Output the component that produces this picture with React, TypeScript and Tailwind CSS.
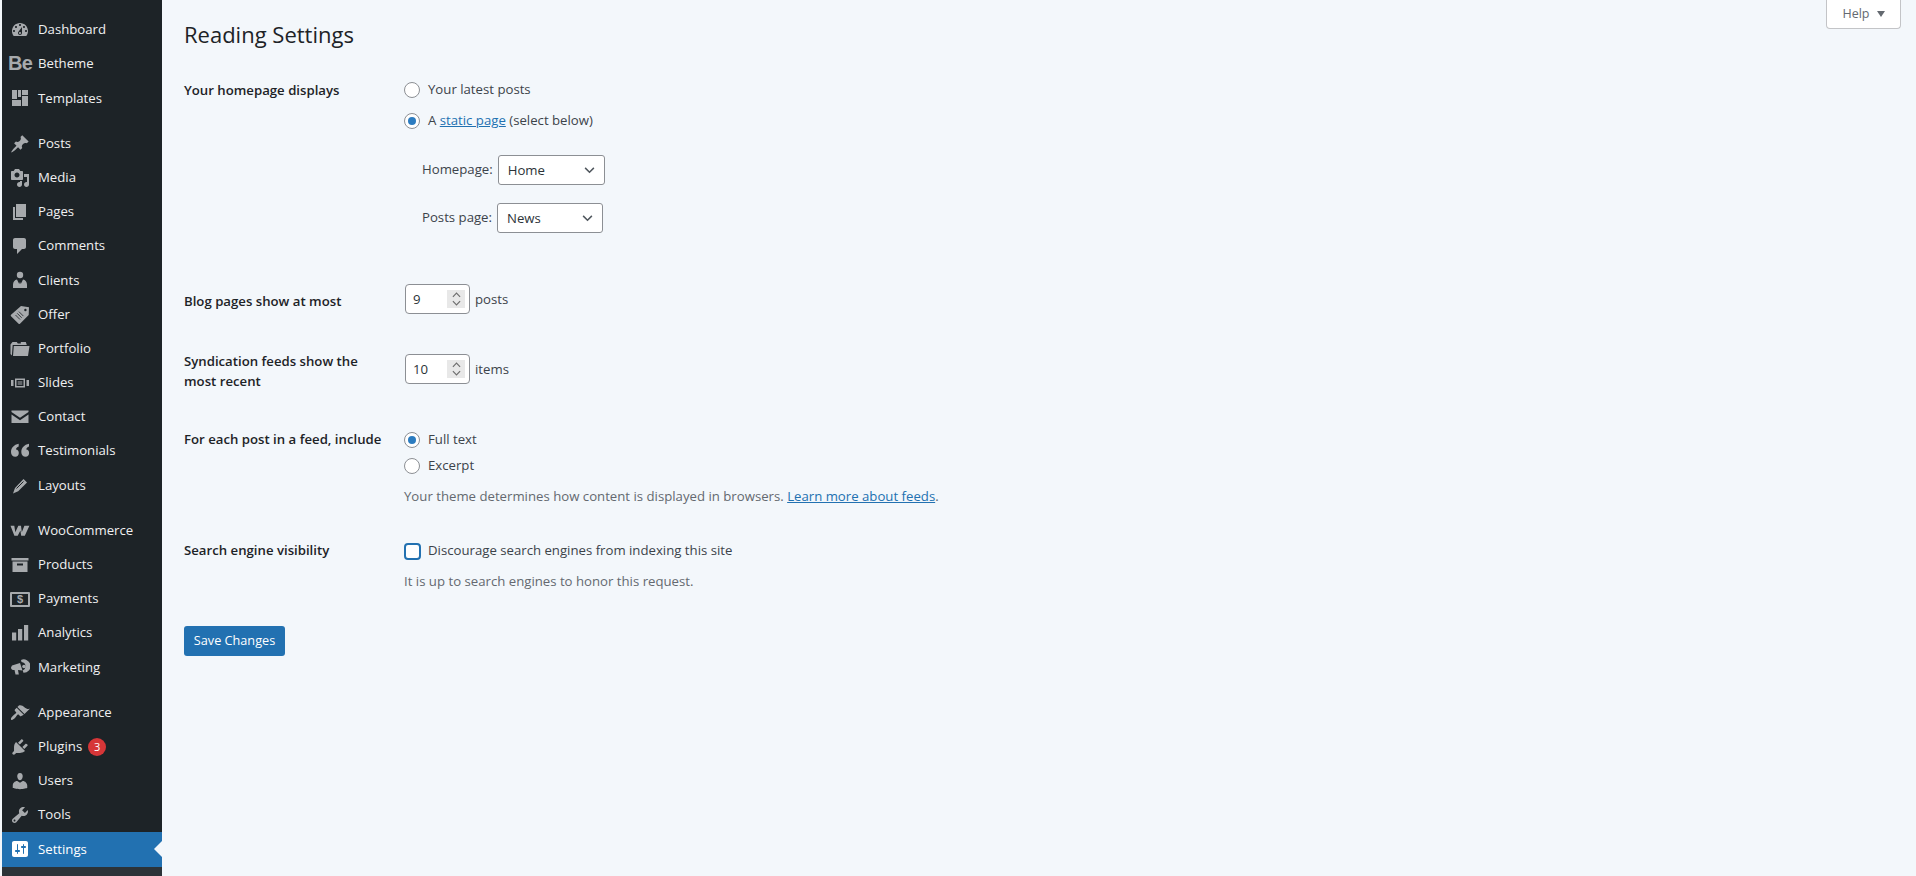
import React from "react";

type Item = { label: string; icon: React.ReactNode; gap?: boolean; badge?: string; active?: boolean };

const P = ({ d }: { d: string }) => (
  <svg viewBox="0 0 20 20" className="w-5 h-5 fill-current" fillRule="evenodd"><path d={d} /></svg>
);
const S = ({ children }: { children: React.ReactNode }) => (
  <svg viewBox="0 0 20 20" className="w-5 h-5 fill-current">{children}</svg>
);

const items: Item[] = [
  { label: "Dashboard", icon: <P d="M3.76 16h12.48c1.1-1.37 1.76-3.11 1.76-5 0-4.42-3.58-8-8-8s-8 3.58-8 8c0 1.89.66 3.63 1.76 5zM10 4c.55 0 1 .45 1 1s-.45 1-1 1-1-.45-1-1 .45-1 1-1zM6 6c.55 0 1 .45 1 1s-.45 1-1 1-1-.45-1-1 .45-1 1-1zm8 0c.55 0 1 .45 1 1s-.45 1-1 1-1-.45-1-1 .45-1 1-1zm-5.37 5.55L12 7v6c0 1.1-.9 2-2 2s-2-.9-2-2c0-.57.24-1.08.63-1.45zM4 10c.55 0 1 .45 1 1s-.45 1-1 1-1-.45-1-1 .45-1 1-1zm12 0c.55 0 1 .45 1 1s-.45 1-1 1-1-.45-1-1 .45-1 1-1zm-5 3c0-.55-.45-1-1-1s-1 .45-1 1 .45 1 1 1 1-.45 1-1z" /> },
  { label: "Betheme", icon: <span className="font-['Liberation_Sans',sans-serif] font-bold text-[20px] leading-5 tracking-[-0.6px] -ml-[2px] -mt-[2px]">Be</span> },
  { label: "Templates", icon: <S><rect x="2" y="2" width="5" height="9" /><rect x="8" y="2" width="3" height="7" /><rect x="12" y="2" width="6" height="5" /><rect x="12" y="8" width="6" height="10" /><rect x="2" y="12" width="9" height="6" /></S> },
  { label: "Posts", gap: true, icon: <P d="M10.44 3.02l1.82-1.82 6.36 6.35-1.83 1.82c-1.05-.68-2.48-.57-3.41.36l-.75.75c-.92.93-1.04 2.35-.35 3.41l-1.83 1.82-2.41-2.41-2.8 2.79c-.42.42-3.38 2.71-3.8 2.29s1.86-3.39 2.28-3.81l2.79-2.79L4.1 9.36l1.83-1.82c1.05.69 2.48.57 3.4-.36l.75-.75c.93-.92 1.05-2.35.36-3.41z" /> },
  { label: "Media", icon: <P d="M13 11V4c0-.55-.45-1-1-1h-1.67L9 1H5L3.67 3H2c-.55 0-1 .45-1 1v7c0 .55.45 1 1 1h10c.55 0 1-.45 1-1zM7 4.5c1.38 0 2.5 1.12 2.5 2.5S8.38 9.5 7 9.5 4.5 8.38 4.5 7 5.62 4.5 7 4.5zM14 6h5v10.5c0 1.38-1.12 2.5-2.5 2.5S14 17.88 14 16.5s1.12-2.5 2.5-2.5c.17 0 .34.02.5.05V9h-3V6zm-4 8.05V13h2v3.5c0 1.38-1.12 2.5-2.5 2.5S7 17.88 7 16.5 8.12 14 9.5 14c.17 0 .34.02.5.05z" /> },
  { label: "Pages", icon: <P d="M6 15V2h10v13H6zm-1 1h8v2H3V5h2v11z" /> },
  { label: "Comments", icon: <P d="M5 2h9c1.1 0 2 .9 2 2v7c0 1.1-.9 2-2 2h-2l-5 5v-5H5c-1.1 0-2-.9-2-2V4c0-1.1.9-2 2-2z" /> },
  { label: "Clients", icon: <S><circle cx="10" cy="5" r="3.2" /><path d="M7 9.5c-2.4.4-4 2.4-4 5V18h14v-3.5c0-2.6-1.600-4.600-4-5l-2.200 4.500L10 12l-.8 2z" /></S> },
  { label: "Offer", icon: <S><path d="M11 1l8 1.300-.3 7.700-8.700 8.700a1 1 0 0 1-1.400 0L1 11.200a1 1 0 0 1 0-1.400zM15.400 3.800a1.200 1.200 0 1 0 0 2.400 1.200 1.200 0 0 0 0-2.400z" fillRule="evenodd" /><path d="M5.500 10l4.500 4.500M7.200 8.300l4.500 4.500M8.900 6.600l4.500 4.500" stroke="#1d2327" strokeWidth=".8" /></S> },
  { label: "Portfolio", icon: <S><path d="M.5 5.500L2.500 3h4.300l1 1.500h3V3h5l1 3H2.700L1.900 16.500.5 15zM3.800 7H19.500l-1.500 10H3z" /></S> },
  { label: "Slides", icon: <S><path d="M5 5.500h10v9H5zm1.500 1.500v6h7V7zM7.700 8.500h4.600v1H7.700zm0 2h4.600v1H7.700zM1 7h2.500v6H1zm15.500 0H19v6h-2.500z" fillRule="evenodd" /></S> },
  { label: "Contact", icon: <S><path d="M1.500 3.500h17v1.500L10 10.800 1.500 5zM1.500 7.500L10 13.300l8.500-5.800V16h-17z" /></S> },
  { label: "Testimonials", icon: <S><path d="M8.700 2.800v2.600c-1.600.5-2.600 1.500-2.700 3 1.600 0 2.800 1.400 2.800 3.500 0 2.400-1.400 3.800-3.500 3.800C2.800 15.700 1 14 1 11c0-4 3-7.400 7.700-8.200zm10.300 0v2.600c-1.600.5-2.600 1.500-2.700 3 1.600 0 2.800 1.400 2.800 3.500 0 2.400-1.400 3.800-3.500 3.800-2.500 0-4.300-1.700-4.300-4.700 0-4 3-7.400 7.700-8.200z" /></S> },
  { label: "Layouts", icon: <S><path d="M13.500 3l3.500 3.500-8.800 8.800-5.200 2.200 2-5.500z" /><path d="M6.500 12.500l7-7" stroke="#1d2327" strokeWidth="1" /></S> },
  { label: "WooCommerce", gap: true, icon: <S><path d="M.5 4.800h3.800l1 6.400 3-6.400h2.700l.8 6.400 2.600-6.400h5l-4.600 10h-3.600l-.8-5.300-2.700 5.300H4.400z" /></S> },
  { label: "Products", icon: <S><path d="M1.500 3h17v2.500h-17zM2.500 6.500h15V17h-15zM7 8.500v2h6v-2z" fillRule="evenodd" /></S> },
  { label: "Payments", icon: <span className="w-5 h-[15px] border-2 border-current rounded-[1px] flex items-center justify-center text-[11px] leading-none font-bold font-['Liberation_Sans',sans-serif]">$</span> },
  { label: "Analytics", icon: <S><rect x="2" y="9.500" width="4.200" height="8" /><rect x="8" y="6" width="4.200" height="11.500" /><rect x="14" y="2" width="4.200" height="15.500" /></S> },
  { label: "Marketing", icon: <S><path d="M2 8.500l8-2.500 2.500 7.500-4.500-.5.800 4.500H5.500L4.500 13H3c-1 0-2-1.200-2-2.500z" /><path d="M11 3a6.700 6.700 0 1 1 2.500 12.800l-.8-2.300a4.500 4.500 0 0 0 2.800-4.200A4.500 4.500 0 0 0 11.500 5z" /><circle cx="14" cy="9.500" r="1.800" /></S> },
  { label: "Appearance", gap: true, icon: <P d="M14.480 11.060L7.410 3.990l1.500-1.500c.5-.56 2.300-.47 3.510.32 1.210.8 1.430 1.280 2.910 2.100 1.180.64 2.450 1.260 4.450.85zm-.71.71L6.700 4.700 4.930 6.470c-.39.39-.39 1.020 0 1.410l1.060 1.060c.39.39.39 1.030 0 1.420-.6.6-1.430 1.110-2.210 1.690-.35.26-.7.530-1.010.840-1.340 1.340-2.370 2.950-1.580 3.740.79.790 2.400-.24 3.740-1.580.3-.3.580-.66.840-1.010.58-.78 1.090-1.610 1.690-2.210.39-.39 1.020-.39 1.410 0l1.060 1.060c.39.39 1.020.39 1.410 0z" /> },
  { label: "Plugins", badge: "3", icon: <P d="M13.110 4.360L9.870 7.600 8 5.730l3.240-3.240c.35-.34 1.050-.2 1.560.32.52.51.66 1.210.31 1.550zm-8 1.770l.91-1.120 9.010 9.010-1.190.84c-.71.71-2.630 1.160-3.820 1.160H6.140L4.900 17.260c-.59.59-1.540.59-2.120 0-.59-.58-.59-1.530 0-2.120l1.240-1.240v-3.880c0-1.130.4-3.190 1.090-3.890zm7.260 3.970l3.240-3.240c.34-.35 1.040-.21 1.550.31.52.51.66 1.210.31 1.550l-3.240 3.250z" /> },
  { label: "Users", icon: <P d="M10 9.250c-2.270 0-2.730-3.440-2.730-3.440C7 4.020 7.820 2 9.970 2c2.160 0 2.980 2.020 2.710 3.810 0 0-.41 3.440-2.680 3.440zm0 2.570L12.720 10c2.390 0 4.520 2.330 4.520 4.530v2.490s-3.650 1.130-7.240 1.130c-3.650 0-7.240-1.130-7.240-1.130v-2.490c0-2.250 1.940-4.480 4.470-4.480z" /> },
  { label: "Tools", icon: <P d="M16.680 9.770c-1.340 1.340-3.300 1.670-4.950.99l-5.410 6.520c-.99.99-2.590.99-3.580 0s-.99-2.590 0-3.570l6.520-5.420c-.68-1.650-.35-3.610.99-4.950 1.280-1.280 3.120-1.620 4.720-1.060l-2.890 2.890 2.820 2.820 2.860-2.870c.53 1.580.18 3.390-1.080 4.650zM3.810 16.210c.4.39 1.040.39 1.430 0 .4-.4.4-1.040 0-1.430-.39-.4-1.030-.4-1.430 0-.39.39-.39 1.030 0 1.430z" /> },
  { label: "Settings", active: true, icon: <P d="M18 16V4c0-1.100-.9-2-2-2H4c-1.100 0-2 .9-2 2v12c0 1.100.9 2 2 2h12c1.100 0 2-.9 2-2zM8 11h1c.55 0 1 .45 1 1s-.45 1-1 1H8v1.500c0 .28-.22.5-.5.5s-.5-.22-.5-.5V13H6c-.55 0-1-.45-1-1s.45-1 1-1h1V5.500c0-.28.22-.5.5-.5s.5.22.5.5V11zm5-2h-1c-.55 0-1-.45-1-1s.45-1 1-1h1V5.500c0-.28.22-.5.5-.5s.5.22.5.5V7h1c.55 0 1 .45 1 1s-.45 1-1 1h-1v5.500c0 .28-.22.5-.5.5s-.5-.22-.5-.5V9z" /> },
];

function Radio({ on }: { on?: boolean }) {
  return (
    <span className="w-4 h-4 rounded-full border border-[#8c8f94] bg-white flex items-center justify-center shrink-0">
      {on && <span className="w-2 h-2 rounded-full bg-[#2c7cc0]" />}
    </span>
  );
}

function Chevron() {
  return (
    <svg viewBox="0 0 12 8" className="w-[11px] h-[7px]" fill="none" stroke="#50575e" strokeWidth="1.700"><path d="M1 1l5 5 5-5" /></svg>
  );
}

function Select({ value, w }: { value: string; w: string }) {
  return (
    <div className={`${w} h-[30px] bg-white border border-[#8c8f94] rounded-[3px] flex items-center justify-between pl-[9px] pr-[9px] text-[#2c3338]`}>
      <span className="mt-[2px]">{value}</span>
      <Chevron />
    </div>
  );
}

function Num({ value }: { value: string }) {
  return (
    <div className="w-[65px] h-[30px] bg-white border border-[#8c8f94] rounded-[4px] flex items-center justify-between pl-[7px] pr-[4px] text-[#2c3338]">
      <span className="mt-[1px]">{value}</span>
      <span className="w-[18px] h-[18px] bg-[#e8e8e8] flex flex-col items-center justify-center gap-[2px]">
        <svg viewBox="0 0 10 6" className="w-[9px] h-[6px]" fill="none" stroke="#6e6e6e" strokeWidth="1.300"><path d="M1 5l4-4 4 4" /></svg>
        <svg viewBox="0 0 10 6" className="w-[9px] h-[6px]" fill="none" stroke="#6e6e6e" strokeWidth="1.300"><path d="M1 1l4 4 4-4" /></svg>
      </span>
    </div>
  );
}

function Label({ children, className = "" }: { children: React.ReactNode; className?: string }) {
  return <div className={`w-[220px] shrink-0 pr-4 font-semibold text-[#1d2327] leading-[20px] ${className}`}>{children}</div>;
}

export default function App() {
  return (
    <div className="w-[1916px] h-[876px] overflow-hidden flex bg-[#f3f7fb] text-[13.2px] text-[#3c434a] font-['Open_Sans',sans-serif]">
      <aside className="w-[160px] ml-[2px] h-full shrink-0 bg-[#1d2327] pt-[13px] flex flex-col text-[#f0f0f1]">
        {items.map((it) => (
          <div
            key={it.label}
            className={`relative h-[34.2px] shrink-0 flex items-center ${it.gap ? "mt-[11px]" : ""} ${it.active ? "bg-[#2271b1] text-white" : ""}`}
          >
            <span className={`w-[36px] pl-[8px] shrink-0 flex items-center ${it.active ? "text-white" : "text-[#a7aaad]"}`}>{it.icon}</span>
            <span>{it.label}</span>
            {it.badge && (
              <span className="ml-[6px] w-[18px] h-[18px] rounded-full bg-[#d63638] text-white text-[11px] flex items-center justify-center">{it.badge}</span>
            )}
            {it.active && (
              <span className="absolute right-0 top-1/2 -translate-y-1/2 w-0 h-0 border-y-[8px] border-y-transparent border-r-[8px] border-r-[#f3f7fb]" />
            )}
          </div>
        ))}
        <div className="flex-1 bg-[#2c3338]" />
      </aside>
      <main className="flex-1 relative pl-[22px]">
        <div className="absolute right-[15px] top-0 w-[75px] h-[29px] bg-white border border-t-0 border-[#c3c4c7] rounded-b-[4px] flex items-center justify-center gap-[7px] text-[#646970] text-[12.5px]">
          Help
          <span className="w-0 h-0 border-x-[4.500px] border-x-transparent border-t-[6px] border-t-[#646970]" />
        </div>
        <h1 className="text-[22px] leading-[30px] mt-[19px] text-[#1d2327]">Reading Settings</h1>

        <div className="flex mt-[31px]">
          <Label>Your homepage displays</Label>
          <div>
            <div className="flex items-center gap-2 h-5"><Radio /><span>Your latest posts</span></div>
            <div className="flex items-center gap-2 h-5 mt-[11px]">
              <Radio on />
              <span>A <a className="text-[#2271b1] underline">static page</a> (select below)</span>
            </div>
            <div className="flex items-center gap-[5px] ml-[18px] mt-[24px]"><span>Homepage:</span><Select value="Home" w="w-[107px]" /></div>
            <div className="flex items-center gap-[5px] ml-[18px] mt-[18px]"><span>Posts page:</span><Select value="News" w="w-[106px]" /></div>
          </div>
        </div>

        <div className="flex mt-[51px] items-center">
          <Label className="mt-[4px]">Blog pages show at most</Label>
          <div className="flex items-center gap-[5px] ml-[1px]"><Num value="9" /><span className="mt-[1px]">posts</span></div>
        </div>

        <div className="flex mt-[40px]">
          <Label className="mt-[-3px]">Syndication feeds show the most recent</Label>
          <div className="flex items-center gap-[5px] ml-[1px] h-[30px]"><Num value="10" /><span className="mt-[1px]">items</span></div>
        </div>

        <div className="flex mt-[39px]">
          <Label className="-mt-[1px]">For each post in a feed, include</Label>
          <div>
            <div className="flex items-center gap-2 h-5"><Radio on /><span>Full text</span></div>
            <div className="flex items-center gap-2 h-5 mt-[6px]"><Radio /><span>Excerpt</span></div>
            <p className="mt-[10px] leading-5 text-[#646970]">Your theme determines how content is displayed in browsers. <a className="text-[#2271b1] underline">Learn more about feeds</a>.</p>
          </div>
        </div>

        <div className="flex mt-[34px]">
          <Label>Search engine visibility</Label>
          <div>
            <div className="flex items-center gap-[7px] h-5 mt-[1px]">
              <span className="w-[17px] h-[17px] rounded-[4px] border-2 border-[#2271b1] bg-white shrink-0" />
              <span>Discourage search engines from indexing this site</span>
            </div>
            <p className="mt-[10px] leading-5 text-[#646970]">It is up to search engines to honor this request.</p>
          </div>
        </div>

        <button className="mt-[35px] w-[101px] h-[30px] rounded-[3px] bg-[#2271b1] text-white text-[12.7px] flex items-center justify-center">Save Changes</button>
      </main>
    </div>
  );
}
